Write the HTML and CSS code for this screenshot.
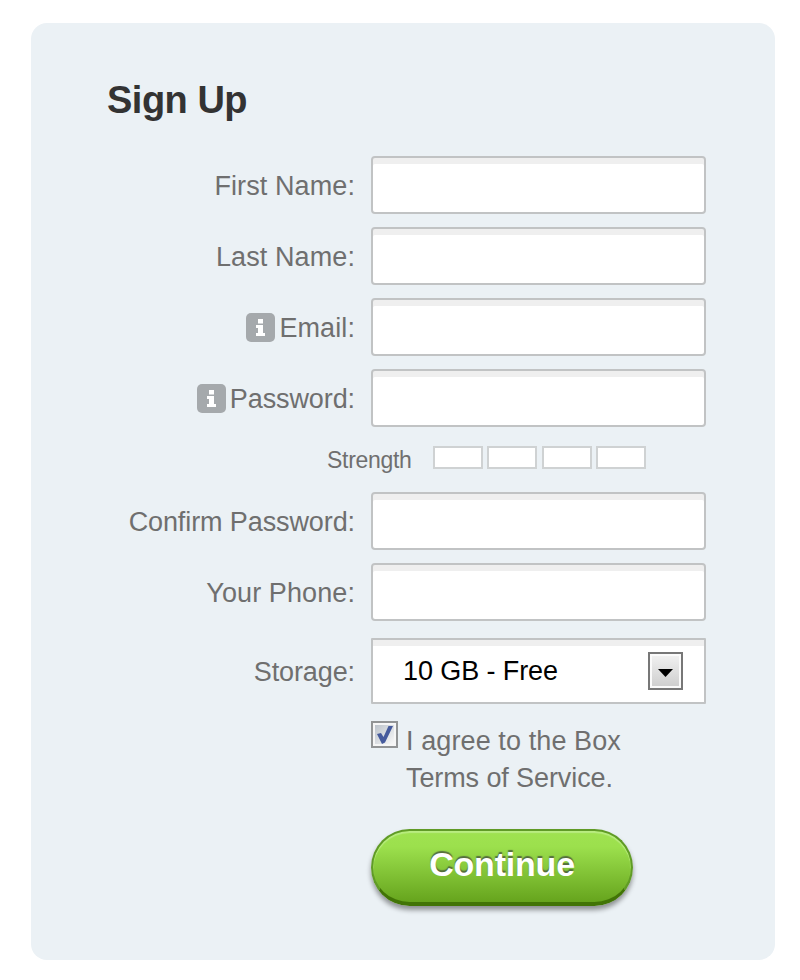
FILE: index.html
```html
<!DOCTYPE html>
<html lang="en">
<head>
  <meta charset="UTF-8" />
  <title>Sign Up</title>
  <link rel="stylesheet" href="styles.css">
</head>
<body>
  <form class="signup">
    <h1>Sign Up</h1>

    <div class="row">
      <label for="first"><span class="loose">First Name:</span></label>
      <input type="text" id="first" class="field">
    </div>
    <div class="row">
      <label for="last"><span class="loose">Last Name:</span></label>
      <input type="text" id="last" class="field">
    </div>
    <div class="row">
      <label for="email">
        <svg class="info" viewBox="0 0 29 29"><rect width="29" height="29" rx="5" fill="#a5a9ac"/><path d="M12 6h5v4.500h-5zM10 12h7v8h2v3h-9v-3h2v-5h-2z" fill="#fff"/></svg>
        <span class="loose">Email:</span>
      </label>
      <input type="text" id="email" class="field">
    </div>
    <div class="row">
      <label for="password">
        <svg class="info" viewBox="0 0 29 29"><rect width="29" height="29" rx="5" fill="#a5a9ac"/><path d="M12 6h5v4.500h-5zM10 12h7v8h2v3h-9v-3h2v-5h-2z" fill="#fff"/></svg>
        <span>Password:</span>
      </label>
      <input type="password" id="password" class="field">
    </div>

    <div class="strength">
      <span class="strength-label">Strength</span>
      <i></i><i></i><i></i><i></i>
    </div>

    <div class="row">
      <label for="confirm"><span>Confirm Password:</span></label>
      <input type="password" id="confirm" class="field">
    </div>
    <div class="row">
      <label for="phone"><span class="loose">Your Phone:</span></label>
      <input type="text" id="phone" class="field">
    </div>
    <div class="row storage">
      <label><span>Storage:</span></label>
      <div class="field select">
        <span>10 GB - Free</span>
        <div class="arrow">
          <svg width="15" height="8" viewBox="0 0 15 8"><path d="M0 0h15L7.5 8z" fill="#000"/></svg>
        </div>
      </div>
    </div>

    <div class="agree">
      <svg class="check" viewBox="0 0 27 27">
        <defs>
          <linearGradient id="box" x2="1" y2="1"><stop stop-color="#bcc3cb"/><stop offset="1" stop-color="#f8f8f8"/></linearGradient>
        </defs>
        <rect x="1" y="1" width="25" height="25" fill="#f6f6f6" stroke="#929495" stroke-width="2"/>
        <rect x="4" y="4" width="19" height="19" fill="url(#box)"/>
        <path d="M6 13l4-1 2.500 4L17.500 5H22L14 21.500l-3 1.500z" fill="#465b9d"/>
      </svg>
      <p><span class="loose">I agree to the Box</span><br><span>Terms of Service.</span></p>
    </div>

    <button type="button" class="continue">Continue</button>
  </form>
</body>
</html>
```
FILE: styles.css
```css
* {
  margin: 0;
  padding: 0;
  box-sizing: border-box;
}
body {
  background: #fff;
  font-family: "Liberation Sans", Arial, sans-serif;
  font-size: 27px;
  letter-spacing: -0.1px;
  color: #6f6f6f;
}
.signup {
  width: 744px;
  height: 937px;
  margin: 23px 0 0 31px;
  padding: 53px 69px 0 76px;
  border-radius: 16px;
  background: #ebf1f5;
}
.loose {
  letter-spacing: 0.1px;
}
h1 {
  height: 80px;
  line-height: 48px;
  font-size: 38px;
  letter-spacing: -0.5px;
  color: #333;
}
.row {
  display: grid;
  grid-template-columns: 248px 335px;
  column-gap: 16px;
  align-items: center;
  height: 58px;
  margin-bottom: 13px;
}
.row label {
  display: flex;
  justify-content: flex-end;
  align-items: center;
  gap: 4px;
  line-height: 32px;
  padding-top: 2px;
  white-space: nowrap;
}
.info {
  width: 29px;
  height: 29px;
  margin-top: -2px;
}
.field {
  width: 335px;
  height: 58px;
  border: 2px solid #c1c3c4;
  border-radius: 4px;
  background: #fff;
  box-shadow: inset 0 6px #efefef;
  outline: none;
}
.strength {
  display: flex;
  align-items: flex-start;
  gap: 4.3px;
  height: 46px;
  margin: 19px 0 0 220px;
}
.strength-label {
  width: 101.7px;
  font-size: 23px;
  line-height: 29px;
  letter-spacing: -0.3px;
}
.strength i {
  width: 50px;
  height: 23px;
  border: 2px solid #cfd2d3;
  background: #fff;
}
.storage {
  height: 66px;
  margin: 17px 0;
}
.select {
  display: flex;
  align-items: center;
  justify-content: space-between;
  height: 66px;
  padding: 0 21px 0 30px;
  border-radius: 1px;
  color: #000;
}
.arrow {
  display: flex;
  align-items: center;
  justify-content: center;
  width: 35px;
  height: 38px;
  padding-top: 4px;
  border: 2px solid #777;
  background: linear-gradient(#f2f2f2, #cdcdcd);
  box-shadow: inset 0 0 0 2px #fafafa;
}
.agree {
  display: flex;
  gap: 8px;
  margin-left: 264px;
  height: 108px;
}
.check {
  width: 27px;
  height: 27px;
}
.agree p {
  line-height: 37px;
  padding-top: 2px;
}
.continue {
  display: block;
  width: 262px;
  height: 77px;
  margin-left: 264px;
  padding-bottom: 4px;
  border: 2px solid #609b26;
  border-bottom: 4px solid #417406;
  border-radius: 39px;
  background: linear-gradient(#9fe250, #9ce04d 22%, #66a41d);
  box-shadow: inset 0 2px 1px #b9ec80, 0 4px 5px rgba(0, 0, 0, 0.4);
  font: bold 34px "Liberation Sans", Arial, sans-serif;
  letter-spacing: -0.2px;
  color: #fff;
  text-shadow: 0 -2px 1px rgba(70, 85, 60, 0.8);
}
```
